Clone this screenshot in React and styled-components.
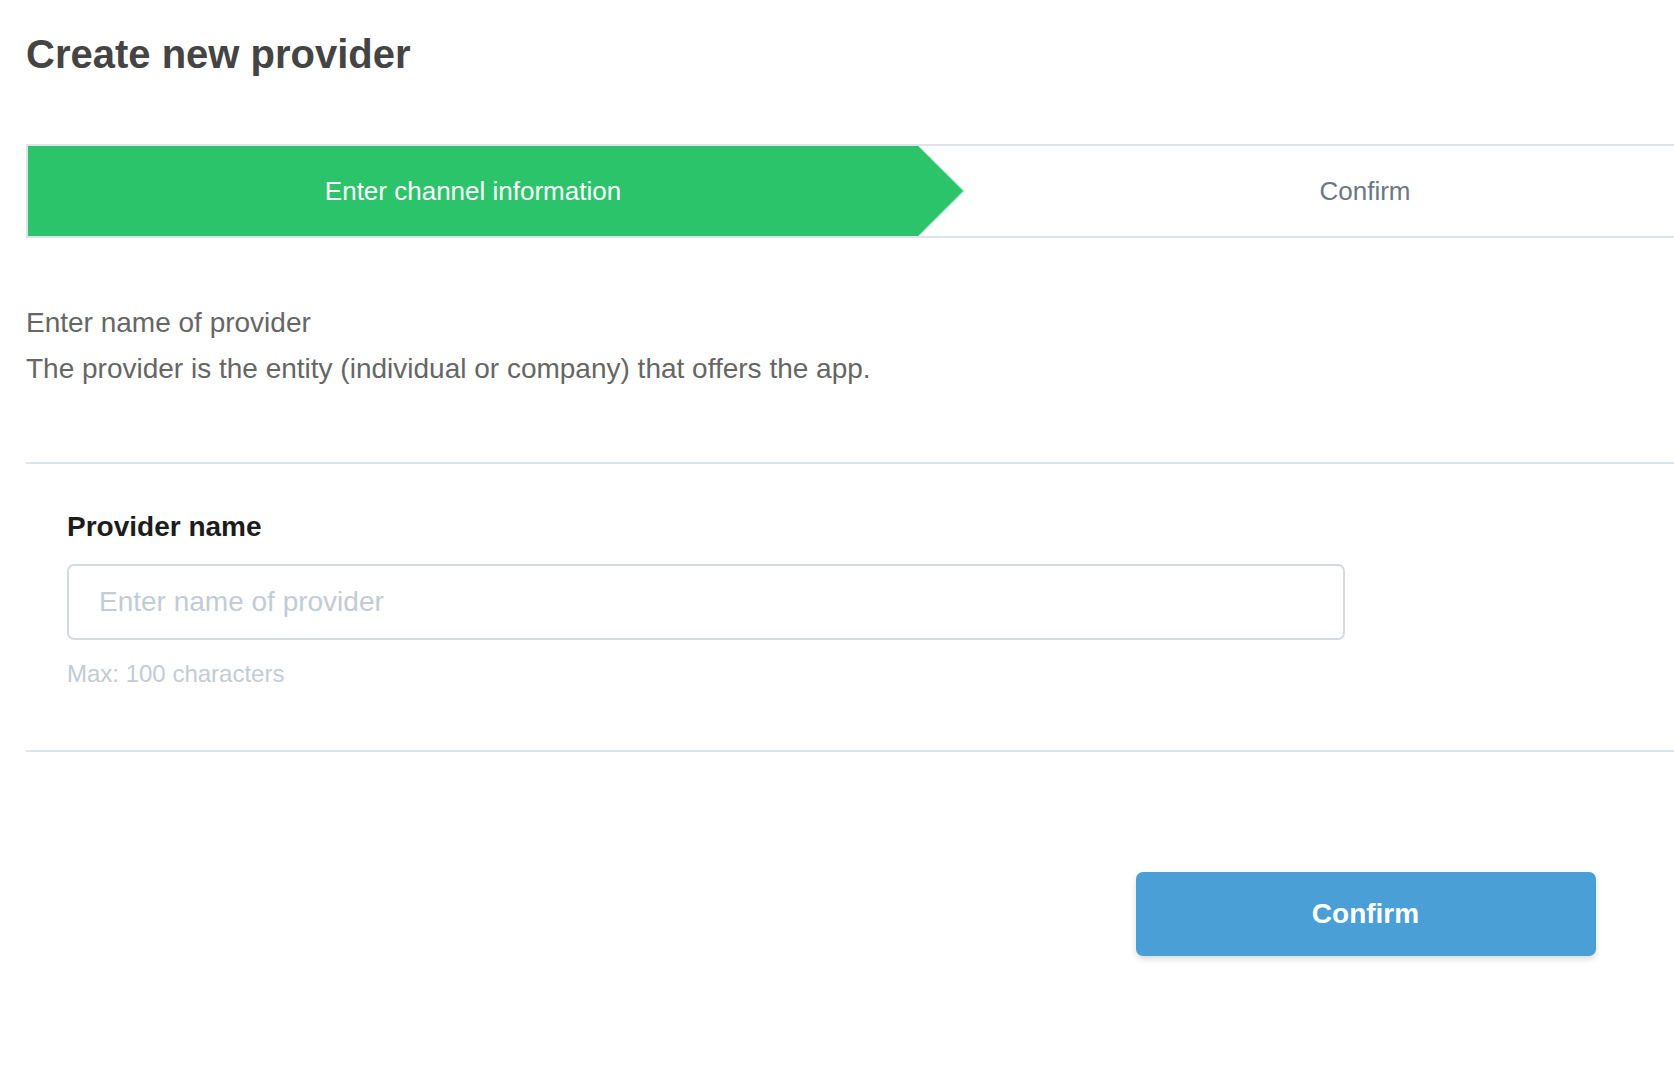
import React from 'react';
import styled, { createGlobalStyle } from 'styled-components';

const GlobalStyle = createGlobalStyle`
  html, body {
    margin: 0;
    padding: 0;
    background: #ffffff;
    overflow: hidden;
  }
  body {
    font-family: "Liberation Sans", Arial, Helvetica, sans-serif;
  }
`;

const Page = styled.div`
  width: 1786px;
  padding: 30px 0 80px 26px;
`;

const Title = styled.h1`
  margin: 0 0 66px 0;
  font-size: 40px;
  line-height: 48px;
  font-weight: 700;
  color: #444444;
`;

const Stepper = styled.div`
  display: grid;
  grid-template-columns: 890px 1fr;
  height: 90px;
  border-top: 2px solid #dfe3eb;
  border-bottom: 2px solid #dfe3eb;
  border-left: 2px solid #dfe3eb;
`;

const Step = styled.div`
  position: relative;
  z-index: ${props => (props.$active ? 1 : 0)};
  display: flex;
  align-items: center;
  justify-content: center;
  font-size: 26px;
  color: ${props => (props.$active ? '#ffffff' : '#6b7784')};
  background: ${props => (props.$active ? '#2bc46a' : '#ffffff')};

  ${props => props.$active && `
    &::before {
      content: '';
      position: absolute;
      left: 100%;
      top: -1px;
      bottom: -1px;
      width: 47px;
      background: #bfe5d3;
      clip-path: polygon(0 0, 100% 50%, 0 100%);
    }
    &::after {
      content: '';
      position: absolute;
      left: 100%;
      top: 0;
      bottom: 0;
      width: 45px;
      background: #2bc46a;
      clip-path: polygon(0 0, 100% 50%, 0 100%);
    }
  `}
`;

const Intro = styled.div`
  padding: 62px 0 70px 0;
  font-size: 28px;
  line-height: 46px;
  color: #666666;
  border-bottom: 2px solid #dfe3eb;
`;

const Para = styled.p`
  margin: 0;
`;

const FormSection = styled.div`
  padding: 46px 0 61px 41px;
  border-bottom: 2px solid #dfe3eb;
`;

const Label = styled.label`
  display: block;
  font-size: 28px;
  line-height: 34px;
  font-weight: 700;
  color: #1c1c1c;
  margin-bottom: 20px;
`;

const Input = styled.input`
  display: block;
  box-sizing: border-box;
  width: 1278px;
  height: 76px;
  padding: 0 30px;
  border: 2px solid #d5dae0;
  border-radius: 7px;
  font-family: "Liberation Sans", Arial, Helvetica, sans-serif;
  font-size: 28px;
  color: #333333;
  outline: none;

  &::placeholder {
    color: #c3cbd5;
  }
`;

const Hint = styled.div`
  margin-top: 19px;
  font-size: 24px;
  line-height: 30px;
  color: #c3cbd5;
`;

const Actions = styled.div`
  display: grid;
  grid-template-columns: 1fr 1fr;
  padding-top: 120px;
`;

const ConfirmButton = styled.button`
  grid-column: 2;
  justify-self: center;
  width: 460px;
  height: 84px;
  border: none;
  border-radius: 7px;
  background: #4a9fd6;
  box-shadow: 0 3px 6px rgba(0, 0, 0, 0.14);
  color: #ffffff;
  font-family: "Liberation Sans", Arial, Helvetica, sans-serif;
  font-size: 28px;
  font-weight: 700;
  cursor: pointer;
`;

const App = () => (
    <>
        <GlobalStyle />
        <Page>
            <Title>Create new provider</Title>
            <Stepper>
                <Step $active>Enter channel information</Step>
                <Step>Confirm</Step>
            </Stepper>
            <Intro>
                <Para>Enter name of provider</Para>
                <Para>The provider is the entity (individual or company) that offers the app.</Para>
            </Intro>
            <FormSection>
                <Label htmlFor="providerName">Provider name</Label>
                <Input id="providerName" placeholder="Enter name of provider" />
                <Hint>Max: 100 characters</Hint>
            </FormSection>
            <Actions>
                <ConfirmButton>Confirm</ConfirmButton>
            </Actions>
        </Page>
    </>
);

export default App;
